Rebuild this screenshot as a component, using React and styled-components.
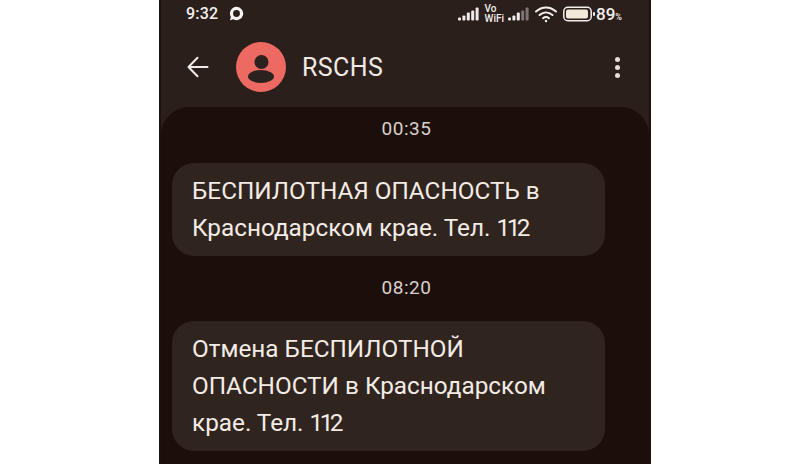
import React from 'react';
import styled, { createGlobalStyle } from 'styled-components';

const Global = createGlobalStyle`
  html, body { margin: 0; padding: 0; background: #fff; }
  body { font-family: Roboto, "Noto Sans", sans-serif; }
`;

const Page = styled.div`
  width: 800px;
  height: 464px;
  overflow: hidden;
  padding-left: 159px;
  box-sizing: border-box;
  background: #fff;
`;

const Phone = styled.div`
  width: 492px;
  height: 464px;
  background: #2a1f1b;
  border-left: 2px solid #191210;
  border-right: 2px solid #191210;
  box-sizing: border-box;
  display: flex;
  flex-direction: column;
  overflow: hidden;
`;

const StatusBar = styled.div`
  height: 27px;
  padding: 0 27px 0 25px;
  display: flex;
  align-items: center;
  color: #f4efec;
  font-size: 16px;
  font-weight: 500;
  flex: none;
`;

const Clock = styled.span`
  letter-spacing: 0.2px;
`;

const StatusRight = styled.div`
  margin-left: auto;
  display: flex;
  align-items: center;
  gap: 5px;
`;

const VoWifi = styled.span`
  font-size: 10px;
  line-height: 10px;
  font-weight: 500;
  margin-left: 1px;
  margin-right: -1px;
`;

const Percent = styled.span`
  font-size: 17px;
  margin-left: -5px;
  & small { font-size: 9px; }
`;

const Header = styled.div`
  height: 80px;
  flex: none;
  padding: 0 29px 0 26px;
  box-sizing: border-box;
  display: flex;
  align-items: center;
`;

const Avatar = styled.div`
  width: 50px;
  height: 50px;
  border-radius: 50%;
  background: #ec6a62;
  margin-left: 27px;
  margin-right: 16px;
  flex: none;
`;

const Name = styled.div`
  color: #f1e9e4;
  font-size: 25px;
  letter-spacing: 0.4px;
`;

const Menu = styled.div`
  margin-left: auto;
  display: flex;
  flex-direction: column;
  gap: 3px;
  & i {
    display: block;
    width: 5px;
    height: 5px;
    border-radius: 50%;
    background: #e6dfdb;
  }
`;

const Sheet = styled.div`
  flex: 1;
  background: #1c0f0a;
  border-radius: 28px 28px 0 0;
  padding: 0 11px;
  display: flex;
  flex-direction: column;
`;

const Time = styled.div`
  color: #d9d0cb;
  font-size: 19px;
  line-height: 20px;
  text-align: center;
  padding-left: 3px;
  letter-spacing: 0.5px;
  margin: ${p => p.$top}px 0 ${p => p.$bottom}px;
`;

const Bubble = styled.div`
  background: #30241f;
  border-radius: 22px;
  margin-right: 33px;
  padding: 9px 20px 10px;
  color: #f3ebe5;
  font-size: 24.3px;
  line-height: 37px;
  white-space: nowrap;
`;

// the 1s in the phone font are narrow, Roboto's digits are not
const Phone112 = styled.span`
  letter-spacing: -3.5px;
`;

function Signal({ dim }) {
  const heights = [3, 5, 8, 10, 13];
  return (
    <svg width="21" height="14" viewBox="0 0 21 14">
      {heights.map((h, i) => (
        <rect key={i} x={i * 4.4} y={13.5 - h} width="3" height={h} rx="1" fill={dim && i > 2 ? '#7d7571' : '#f0ebe8'} />
      ))}
    </svg>
  );
}

function Wifi() {
  return (
    <svg width="24" height="18" viewBox="0 0 24 18" fill="none" stroke="#f4efec" strokeWidth="2" strokeLinecap="round">
      <path d="M2 6.5C8 1 16 1 22 6.5" />
      <path d="M5.5 10C9.5 6.5 14.5 6.5 18.5 10" />
      <path d="M9 13.2C10.8 11.8 13.2 11.8 15 13.2" />
      <circle cx="12" cy="16" r="1.2" fill="#f4efec" stroke="none" />
    </svg>
  );
}

function Battery() {
  return (
    <svg width="33" height="16" viewBox="0 0 33 16">
      <rect x="0.8" y="1.3" width="27.4" height="13.4" rx="4" fill="none" stroke="#f4efec" strokeWidth="1.5" />
      <rect x="3" y="3.5" width="22" height="9" rx="2" fill="#f2ead8" />
      <rect x="30" y="6" width="2" height="4" rx="1" fill="#f4efec" />
    </svg>
  );
}

function ChatIcon() {
  return (
    <svg width="15" height="15" viewBox="0 0 14 14" style={{ marginLeft: 11 }}>
      <path fillRule="evenodd" fill="#f7f3f0" d="M7 .8a6.2 6.2 0 1 1-3 11.6L.8 13.2l1-3A6.2 6.2 0 0 1 7 .8Zm0 3a3.2 3.2 0 1 0 0 6.4 3.2 3.2 0 0 0 0-6.4Z" />
    </svg>
  );
}

function Person() {
  return (
    <svg width="50" height="50" viewBox="0 0 50 50" fill="#2b2220">
      <circle cx="25.5" cy="20" r="7" />
      <ellipse cx="25" cy="34.5" rx="13" ry="6.5" />
    </svg>
  );
}

function Back() {
  return (
    <svg width="22" height="22" viewBox="0 0 22 22" fill="none" stroke="#f1ebe7" strokeWidth="2" strokeLinecap="round" strokeLinejoin="round">
      <path d="M20.5 11H1.5M10.5 1.8 1.5 11l9 9.2" />
    </svg>
  );
}

export default function App() {
  return (
    <Page>
      <Global />
      <Phone>
        <StatusBar>
          <Clock>9:32</Clock>
          <ChatIcon />
          <StatusRight>
            <Signal />
            <VoWifi>Vo<br />WiFi</VoWifi>
            <Signal dim />
            <Wifi />
            <Battery />
            <Percent>89<small>%</small></Percent>
          </StatusRight>
        </StatusBar>
        <Header>
          <Back />
          <Avatar><Person /></Avatar>
          <Name>RSCHS</Name>
          <Menu><i /><i /><i /></Menu>
        </Header>
        <Sheet>
          <Time $top={12} $bottom={24}>00:35</Time>
          <Bubble>БЕСПИЛОТНАЯ ОПАСНОСТЬ в<br />Краснодарском крае. Тел. <Phone112>112</Phone112></Bubble>
          <Time $top={22} $bottom={23}>08:20</Time>
          <Bubble>Отмена БЕСПИЛОТНОЙ<br />ОПАСНОСТИ в Краснодарском<br />крае. Тел. <Phone112>112</Phone112></Bubble>
        </Sheet>
      </Phone>
    </Page>
  );
}
